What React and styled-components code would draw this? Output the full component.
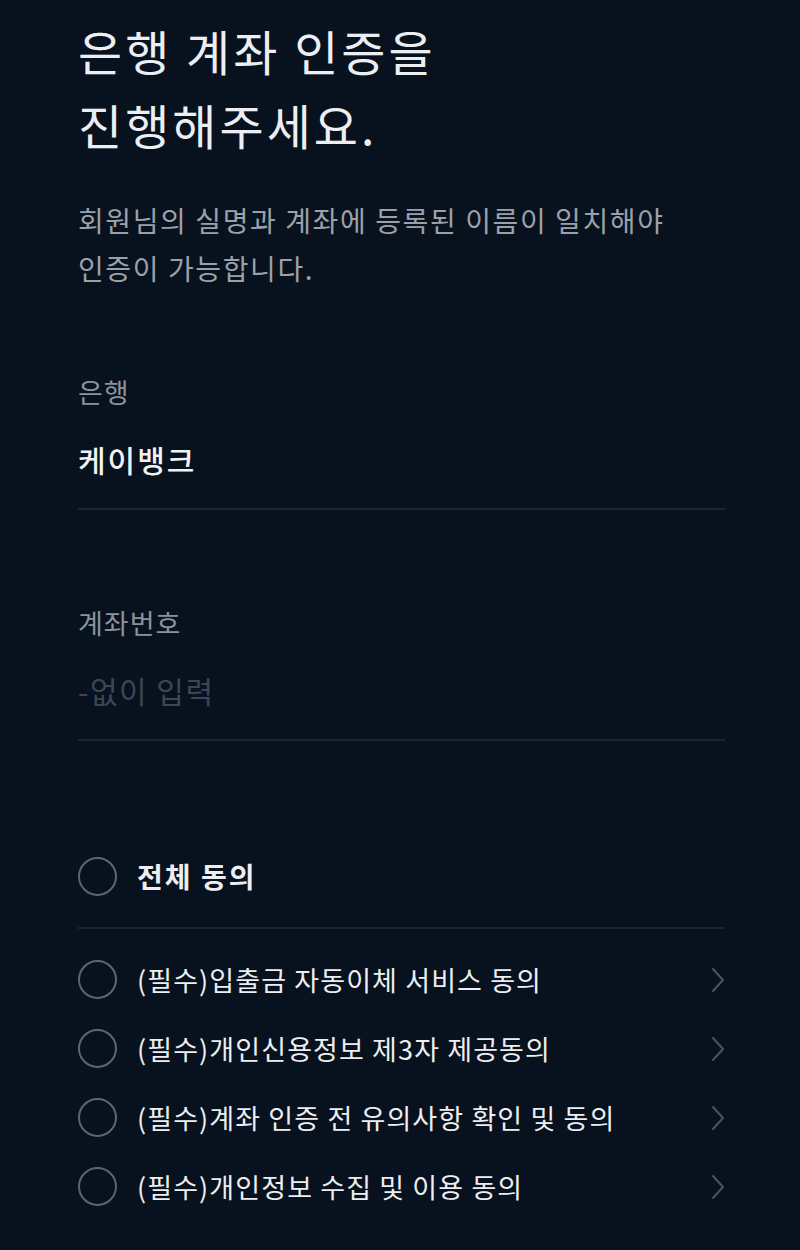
import React from "react"
import styled, { createGlobalStyle } from "styled-components"

const colors = {
  bg: "#08111e",
  title: "#eceef1",
  sub: "#9ba1aa",
  label: "#8c929c",
  value: "#f1f2f4",
  placeholder: "#3d4655",
  line: "#1b2330",
  circle: "#5d6571",
  chevron: "#4b5361",
}

const GlobalStyle = createGlobalStyle`
  html, body {
    margin: 0;
    padding: 0;
    background: ${colors.bg};
  }
  * {
    box-sizing: border-box;
  }
`

const Page = styled.main`
  background: ${colors.bg};
  min-height: 1250px;
  padding: 13px 75px 0 78px;
  font-family: "Noto Sans CJK KR", "Noto Sans", sans-serif;
`

const Title = styled.h1`
  margin: 0;
  color: ${colors.title};
  font-size: 48px;
  font-weight: 400;
  line-height: 74px;
  letter-spacing: 3px;
`

const Description = styled.p`
  margin: 35px 0 0;
  color: ${colors.sub};
  font-size: 28px;
  line-height: 48px;
  letter-spacing: 1.6px;
`

const Field = styled.section`
  margin-top: ${(p) => p.$top}px;
  padding-bottom: 29px;
  border-bottom: 2px solid ${colors.line};
`

const Label = styled.div`
  color: ${colors.label};
  font-size: 27px;
  line-height: 36px;
  letter-spacing: 1px;
`

const Value = styled.div`
  margin-top: 29px;
  color: ${(p) => (p.$empty ? colors.placeholder : colors.value)};
  font-size: 30px;
  font-weight: ${(p) => (p.$empty ? 400 : 500)};
  line-height: 40px;
  letter-spacing: ${(p) => (p.$empty ? 1.5 : 2)}px;
`

const Agreements = styled.section`
  margin-top: 110px;
`

const Row = styled.div`
  display: flex;
  align-items: center;
  gap: 20px;
  height: ${(p) => (p.$all ? 50 : 69)}px;
`

const Circle = styled.span`
  flex: none;
  width: 39px;
  height: 39px;
  border-radius: 50%;
  border: 2px solid ${colors.circle};
`

const RowText = styled.span`
  flex: 1;
  color: ${colors.title};
  font-size: ${(p) => (p.$all ? 28 : 27)}px;
  font-weight: ${(p) => (p.$all ? 700 : 400)};
  letter-spacing: ${(p) => (p.$all ? 2 : 1.1)}px;
`

const Divider = styled.hr`
  margin: 26px 0 16px;
  border: none;
  border-top: 2px solid ${colors.line};
`

const Chevron = () => (
  <svg width="14" height="26" viewBox="0 0 14 26" fill="none">
    <path d="M2 2 L12 13 L2 24" stroke={colors.chevron} strokeWidth="2" strokeLinecap="round" strokeLinejoin="round" />
  </svg>
)

const terms = [
  "(필수)입출금 자동이체 서비스 동의",
  "(필수)개인신용정보 제3자 제공동의",
  "(필수)계좌 인증 전 유의사항 확인 및 동의",
  "(필수)개인정보 수집 및 이용 동의",
]

export default function App() {
  return (
    <>
      <GlobalStyle />
      <Page>
        <Title>
          은행 계좌 인증을
          <br />
          진행해주세요.
        </Title>
        <Description>
          회원님의 실명과 계좌에 등록된 이름이 일치해야
          <br />
          인증이 가능합니다.
        </Description>

        <Field $top={82}>
          <Label>은행</Label>
          <Value>케이뱅크</Value>
        </Field>

        <Field $top={95}>
          <Label>계좌번호</Label>
          <Value $empty>-없이 입력</Value>
        </Field>

        <Agreements>
          <Row $all>
            <Circle />
            <RowText $all>전체 동의</RowText>
          </Row>
          <Divider />
          {terms.map((t) => (
            <Row key={t}>
              <Circle />
              <RowText>{t}</RowText>
              <Chevron />
            </Row>
          ))}
        </Agreements>
      </Page>
    </>
  )
}
